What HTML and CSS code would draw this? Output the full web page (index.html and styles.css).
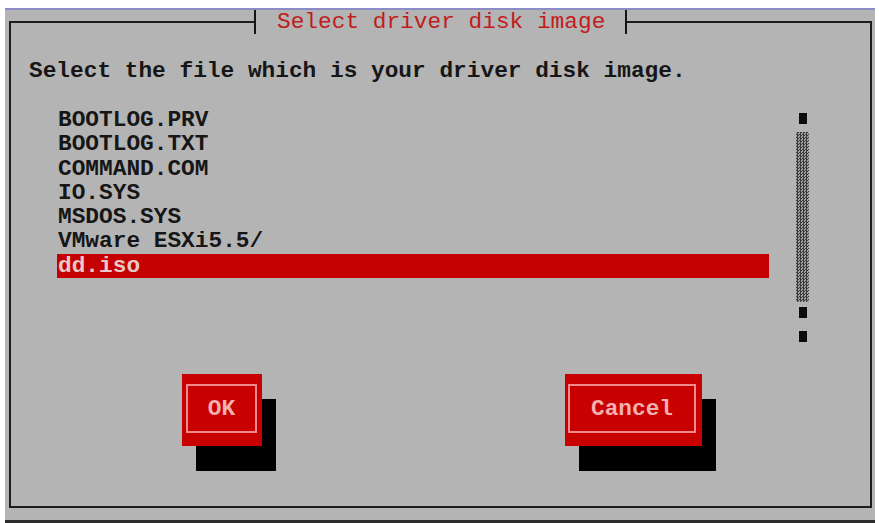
FILE: index.html
```html
<!DOCTYPE html>
<html lang="en">
<head>
<meta charset="utf-8">
<title>Select driver disk image</title>
<link rel="stylesheet" href="styles.css">
</head>
<body>
<div class="screen">
  <fieldset class="dialog">
    <legend class="dialog-title">Select driver disk image</legend>
    <p class="prompt">Select the file which is your driver disk image.</p>
    <div class="picker">
      <ul class="files">
        <li>BOOTLOG.PRV</li>
        <li>BOOTLOG.TXT</li>
        <li>COMMAND.COM</li>
        <li>IO.SYS</li>
        <li>MSDOS.SYS</li>
        <li>VMware ESXi5.5/</li>
        <li class="selected">dd.iso</li>
      </ul>
      <div class="scrollbar">
        <span class="arrow"></span>
        <span class="track"></span>
        <span class="arrow"></span>
        <span class="arrow"></span>
      </div>
    </div>
    <div class="actions">
      <button class="btn btn-ok" type="button"><span>OK</span></button>
      <button class="btn btn-cancel" type="button"><span>Cancel</span></button>
    </div>
  </fieldset>
</div>
</body>
</html>
```
FILE: styles.css
```css
html, body {
  margin: 0;
  padding: 0;
  background: #ffffff;
}

body {
  width: 879px;
  height: 523px;
  overflow: hidden;
  font-family: "Liberation Mono", "DejaVu Sans Mono", monospace;
  font-size: 22.8px;
  line-height: 24px;
}

/* gray console surface */
.screen {
  margin: 8px 0 0 5px;
  width: 870px;
  height: 510px;
  background: #b4b4b4;
  border-top: 2px solid #8c8cc6;
  border-bottom: 3px solid #2c2c2c;
  display: flex;
  flex-direction: column;
}

/* window frame with its title set into the top edge */
.dialog {
  margin: 0 3px 12px 4px;
  padding: 0;
  border: 2px solid #1c1c1c;
  min-width: 0;
  flex: 1;
  display: flex;
  flex-direction: column;
}

.dialog-title {
  margin-left: 243px;
  padding: 0 20px 0 21px;
  height: 24px;
  line-height: 24px;
  border-left: 2px solid #141414;
  border-right: 2px solid #141414;
  color: #c01c1c;
}

.prompt {
  margin: 25px 0 0 18px;
  color: #161616;
  font-weight: bold;
}

.picker {
  display: flex;
  align-items: flex-start;
  margin: 25px 0 0 46px;
}

.files {
  list-style: none;
  margin: 0;
  padding: 0;
  width: 712px;
  color: #161616;
  font-weight: bold;
}

.files li {
  height: 24.3px;
  line-height: 24px;
  padding-left: 1px;
  white-space: pre;
}

.files .selected {
  background: #c40000;
  color: #e8c8c8;
}

.scrollbar {
  margin: 5px 0 0 27px;
  width: 13px;
  display: flex;
  flex-direction: column;
  align-items: center;
}

.arrow {
  display: block;
  width: 8px;
  height: 11px;
  background: #0c0c0c;
}

.arrow + .arrow {
  margin-top: 13px;
}

.track {
  display: block;
  width: 13px;
  height: 170px;
  margin: 8px 0 5px;
  background: repeating-conic-gradient(#3c3c3c 0 25%, #a0a0a0 0 50%) 0 0 / 3px 3px;
}

.actions {
  display: flex;
  align-items: flex-start;
  gap: 303px;
  margin: 32px 0 0 171px;
}

.btn {
  display: flex;
  margin: 0;
  height: 72px;
  padding: 10px 5px 13px 4px;
  border: none;
  background: #c80000;
  box-shadow: 14px 25px 0 #000000;
  font: inherit;
  font-weight: bold;
  color: #f2b0b0;
  cursor: pointer;
}

.btn span {
  flex: 1;
  display: flex;
  align-items: center;
  justify-content: center;
  border: 2px solid #ee8a8a;
}

.btn-ok {
  width: 80px;
}

.btn-cancel {
  width: 137px;
  padding-left: 3px;
  padding-right: 6px;
}
```
